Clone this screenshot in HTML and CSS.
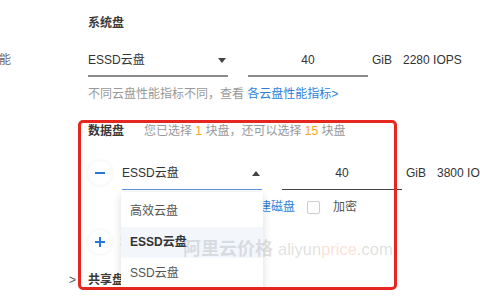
FILE: index.html
```html
<!DOCTYPE html>
<html>
<head>
  <title>云盘配置</title>
  <link rel="stylesheet" href="styles.css">
</head>
<body>
  <div class="page">
    <div class="row title-row">
      <div class="label"></div>
      <div class="title">系统盘</div>
    </div>

    <div class="row disk-row system-row">
      <div class="label side"><span>性能</span></div>
      <div class="select">
        <span>ESSD云盘</span>
        <span class="caret down"></span>
      </div>
      <div class="size">40</div>
      <span class="unit">GiB</span>
      <span class="iops">2280 IOPS</span>
    </div>

    <div class="row hint-row">
      <div class="label"></div>
      <div class="hint">不同云盘性能指标不同，查看 <a class="link">各云盘性能指标&gt;</a></div>
    </div>

    <div class="data">
      <div class="row data-title">
        <div class="label"></div>
        <div class="title">数据盘</div>
        <div class="count">您已选择 <b>1</b> 块盘，还可以选择 <b>15</b> 块盘</div>
      </div>

      <div class="row disk-row data-row">
        <div class="label"></div>
        <div class="circle minus"></div>
        <div class="select active">
          <span>ESSD云盘</span>
          <span class="caret up"></span>
          <div class="menu">
            <div class="item">高效云盘</div>
            <div class="item selected">ESSD云盘</div>
            <div class="item">SSD云盘</div>
          </div>
        </div>
        <div class="size thin">40</div>
        <span class="unit">GiB</span>
        <span class="iops">3800 IOPS</span>
      </div>

      <div class="row option-row">
        <div class="label"></div>
        <a class="link snap">用快照创建磁盘</a>
        <span class="checkbox"></span>
        <span class="check-text">加密</span>
      </div>

      <div class="row add-row">
        <div class="label"></div>
        <div class="circle plus"></div>
        <span class="add-text">增加一块数据盘</span>
      </div>

      <div class="row share-row">
        <div class="label arrow">&gt;</div>
        <div class="title">共享盘</div>
      </div>

      <div class="frame"></div>
    </div>

    <div class="watermark">阿里云价格 <span class="wm-site">aliyun<em>price</em>.com</span></div>
  </div>
</body>
</html>
```

FILE: styles.css
```css
html, body {
  overflow: hidden;
}
body {
  margin: 0;
  font-family: "Liberation Sans", "Noto Sans CJK SC", sans-serif;
  font-size: 12px;
  color: #333;
  background: #fff;
}
.page {
  padding-top: 13px;
  white-space: nowrap;
}
.row {
  display: flex;
  align-items: flex-start;
}
.label {
  flex: none;
  width: 88px;
}
.side {
  width: 11px;
  margin-right: 77px;
  display: flex;
  justify-content: flex-end;
  color: #666;
  line-height: 26px;
}
.title {
  line-height: 20px;
  font-weight: bold;
  color: #3a3a3a;
}
.system-row {
  margin-top: 14px;
}
.select {
  position: relative;
  flex: none;
  width: 140px;
  box-sizing: border-box;
  display: flex;
  justify-content: space-between;
  align-items: center;
  line-height: 26px;
  padding-bottom: 2px;
  border-bottom: 2px solid #8a8a8a;
}
.caret {
  width: 0;
  height: 0;
  margin-right: 2px;
  border-left: 4px solid transparent;
  border-right: 4px solid transparent;
}
.caret.down {
  border-top: 5px solid #444;
}
.caret.up {
  border-bottom: 5px solid #444;
  margin-right: 2px;
}
.size {
  flex: none;
  width: 120px;
  margin-left: 20px;
  text-align: center;
  line-height: 26px;
  padding-bottom: 2px;
  border-bottom: 2px solid #8a8a8a;
}
.unit {
  margin-left: 4px;
  line-height: 26px;
}
.iops {
  margin-left: 11px;
  line-height: 26px;
}
.hint-row {
  margin-top: 8px;
}
.hint {
  line-height: 18px;
  color: #999;
}
.link {
  color: #2f7fd8;
  cursor: pointer;
}
.data {
  position: relative;
  margin-top: 18px;
}
.count {
  margin-left: 20px;
  line-height: 20px;
  color: #999;
}
.count b {
  font-weight: normal;
  color: #f5a623;
}
.data-row {
  margin-top: 19px;
}
.circle {
  flex: none;
  position: relative;
  width: 24px;
  height: 24px;
  margin-top: 1px;
  margin-right: 10px;
  border-radius: 50%;
  background: #fff;
  box-shadow: 0 0 4px rgba(0, 0, 0, 0.08);
}
.circle::before,
.circle.plus::after {
  content: "";
  position: absolute;
  left: 7px;
  top: 11px;
  width: 10px;
  height: 2px;
  background: #2a78d6;
}
.circle.plus::after {
  transform: rotate(90deg);
}
.select.active {
  padding-bottom: 3px;
  border-bottom: 1px solid #5a9be0;
}
.size.thin {
  padding-bottom: 3px;
  border-bottom: 1px solid #444;
}
.menu {
  position: absolute;
  left: -1px;
  top: 32px;
  width: 142px;
  padding: 4px 0 2px;
  background: #fff;
  box-shadow: 0 2px 8px rgba(0, 0, 0, 0.14);
  z-index: 2;
}
.item {
  height: 31px;
  line-height: 31px;
  padding-left: 9px;
  color: #555;
}
.item.selected {
  background: #f3f7fc;
  font-weight: bold;
  color: #333;
}
.option-row {
  margin-top: 8px;
  line-height: 18px;
  align-items: center;
}
.snap {
  margin-left: 123px;
}
.checkbox {
  width: 11px;
  height: 11px;
  margin-left: 12px;
  border: 1px solid #ccc;
  border-radius: 2px;
  background: #fff;
}
.check-text {
  margin-left: 13px;
  color: #555;
}
.add-row {
  margin-top: 13px;
}
.add-text {
  line-height: 26px;
  color: #999;
  margin-left: -2px;
}
.share-row {
  margin-top: 15px;
}
.arrow {
  width: 76px;
  padding-right: 12px;
  text-align: right;
  line-height: 20px;
  color: #555;
}
.frame {
  position: absolute;
  left: 78px;
  top: -1px;
  width: 319px;
  height: 170px;
  box-sizing: border-box;
  border: 3px solid #e5271f;
  border-radius: 5px;
  z-index: 3;
}
.watermark {
  position: absolute;
  left: 183px;
  top: 238px;
  font-size: 18px;
  font-weight: bold;
  line-height: 22px;
  color: rgba(150, 150, 150, 0.3);
  z-index: 4;
}
.wm-site {
  font-size: 16.5px;
  font-weight: normal;
}
.wm-site em {
  font-style: normal;
  color: rgba(250, 150, 110, 0.3);
}
```
